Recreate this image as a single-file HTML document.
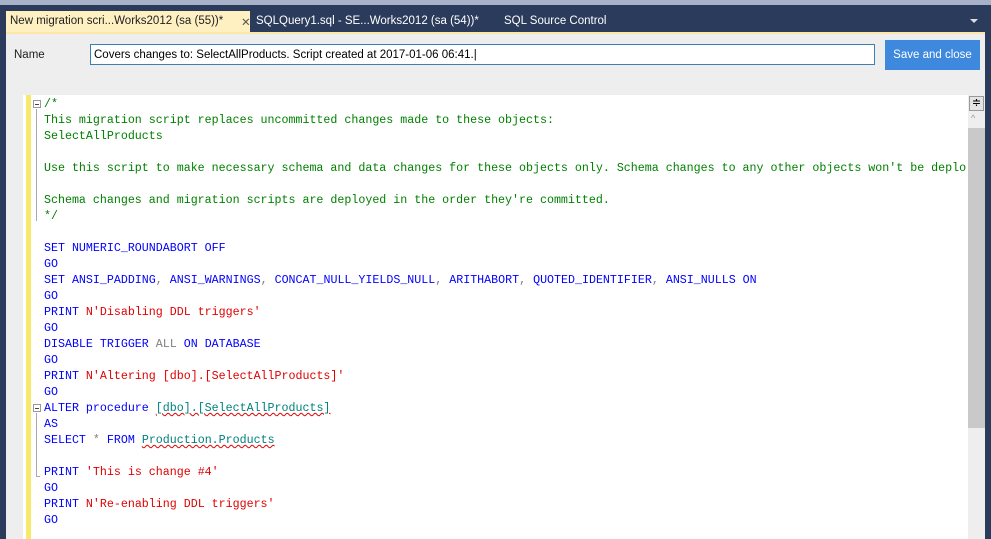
<!DOCTYPE html>
<html><head><meta charset="utf-8"><style>
*{margin:0;padding:0;box-sizing:border-box}
body{width:991px;height:539px;overflow:hidden;background:#2b3b5c;font-family:"Liberation Sans",sans-serif;position:relative}
.top{position:absolute;left:0;top:0;width:991px;height:5px;background:#a7b1c7}
.tab1{position:absolute;left:6px;top:11px;width:244px;height:21px;background:#fff0c2;font-size:11.5px;color:#1e1e1e;padding:4px 0 0 4px;white-space:nowrap}
.tab1 .x{position:absolute;left:235px;top:4px;color:#555}
.tab2{position:absolute;left:256px;top:15px;font-size:11.5px;color:#fff;white-space:nowrap}
.tab3{position:absolute;left:504px;top:15px;font-size:11.5px;color:#fff}
.dd{position:absolute;left:970px;top:19px;width:0;height:0;border-left:4px solid transparent;border-right:4px solid transparent;border-top:4px solid #ddd}
.doc{position:absolute;left:6px;top:32px;width:979px;height:507px;background:#eeeeef;border-top:2px solid #fde7a8}
.name{position:absolute;left:14px;top:49px;font-size:11.5px;color:#1e1e1e}
.inp{position:absolute;left:90px;top:44px;width:785px;height:21px;background:#fff;border:1px solid #3c7fb1;font-size:11.5px;padding:4px 0 0 3px;color:#000;white-space:nowrap}
.btn{position:absolute;left:885px;top:40px;width:95px;height:30px;background:#3e88dd;color:#fff;font-size:11.5px;text-align:center;line-height:31px}
.ed{position:absolute;left:23px;top:95px;width:945px;height:444px;background:#fff}
.yb{position:absolute;left:26px;top:95px;width:5px;height:444px;background:#f6e96b}
.code{position:absolute;left:44px;top:97px;font-family:"Liberation Mono",monospace;font-size:11.65px;line-height:16px;white-space:pre;color:#0000ff}
.g{color:#008000}.r{color:#e00000}.gr{color:#808080}.t{color:#008080}
.sq{text-decoration:underline wavy #e00000;text-decoration-thickness:1px}
.fold{position:absolute;left:33px;width:8px;height:8px;border:1px solid #999;background:#fff}
.fold:after{content:"";position:absolute;left:1px;top:3px;width:4px;height:1px;background:#444}
.fl{position:absolute;left:36px;width:1px;background:#aaa}
.sb{position:absolute;left:968px;top:95px;width:17px;height:444px;background:#eeeeef}
.th{position:absolute;left:968px;top:128px;width:17px;height:300px;background:#c9c9c9}
.spl{position:absolute;left:969px;top:96px;width:15px;height:15px;border:1px solid #999;background:#e4e4e4;font-size:11px;text-align:center;line-height:13px;color:#000}
.up{position:absolute;left:971px;top:113px;font-size:9px;color:#999}
</style></head><body>
<div class="top"></div>
<div class="tab1">New migration scri...Works2012 (sa (55))*<span class="x">✕</span></div>
<div class="tab2">SQLQuery1.sql - SE...Works2012 (sa (54))*</div>
<div class="tab3">SQL Source Control</div>
<div class="dd"></div>
<div class="doc"></div>
<div class="name">Name</div>
<div class="inp">Covers changes to: SelectAllProducts. Script created at 2017-01-06 06:41.|</div>
<div class="btn">Save and close</div>
<div class="ed"></div>
<div class="yb"></div>
<div class="fold" style="top:100px"></div>
<div class="fl" style="top:109px;height:112px"></div>
<div class="fold" style="top:404px"></div>
<div class="fl" style="top:413px;height:64px"></div>
<div class="fl" style="top:476px;height:1px;width:4px"></div>
<div class="code"><span class="g">/*
This migration script replaces uncommitted changes made to these objects:
SelectAllProducts

Use this script to make necessary schema and data changes for these objects only. Schema changes to any other objects won't be deplo

Schema changes and migration scripts are deployed in the order they're committed.
*/</span>

SET NUMERIC_ROUNDABORT OFF
GO
SET ANSI_PADDING<span class="gr">,</span> ANSI_WARNINGS<span class="gr">,</span> CONCAT_NULL_YIELDS_NULL<span class="gr">,</span> ARITHABORT<span class="gr">,</span> QUOTED_IDENTIFIER<span class="gr">,</span> ANSI_NULLS ON
GO
PRINT <span class="r">N'Disabling DDL triggers'</span>
GO
DISABLE TRIGGER <span class="gr">ALL</span> ON DATABASE
GO
PRINT <span class="r">N'Altering [dbo].[SelectAllProducts]'</span>
GO
ALTER procedure <span class="t sq">[dbo].[SelectAllProducts]</span>
AS
SELECT <span class="gr">*</span> FROM <span class="t sq">Production.Products</span>

PRINT <span class="r">'This is change #4'</span>
GO
PRINT <span class="r">N'Re-enabling DDL triggers'</span>
GO</div>
<div class="sb"></div>
<div class="th"></div>
<div class="spl">≑</div>
<div class="up">^</div>
</body></html>
